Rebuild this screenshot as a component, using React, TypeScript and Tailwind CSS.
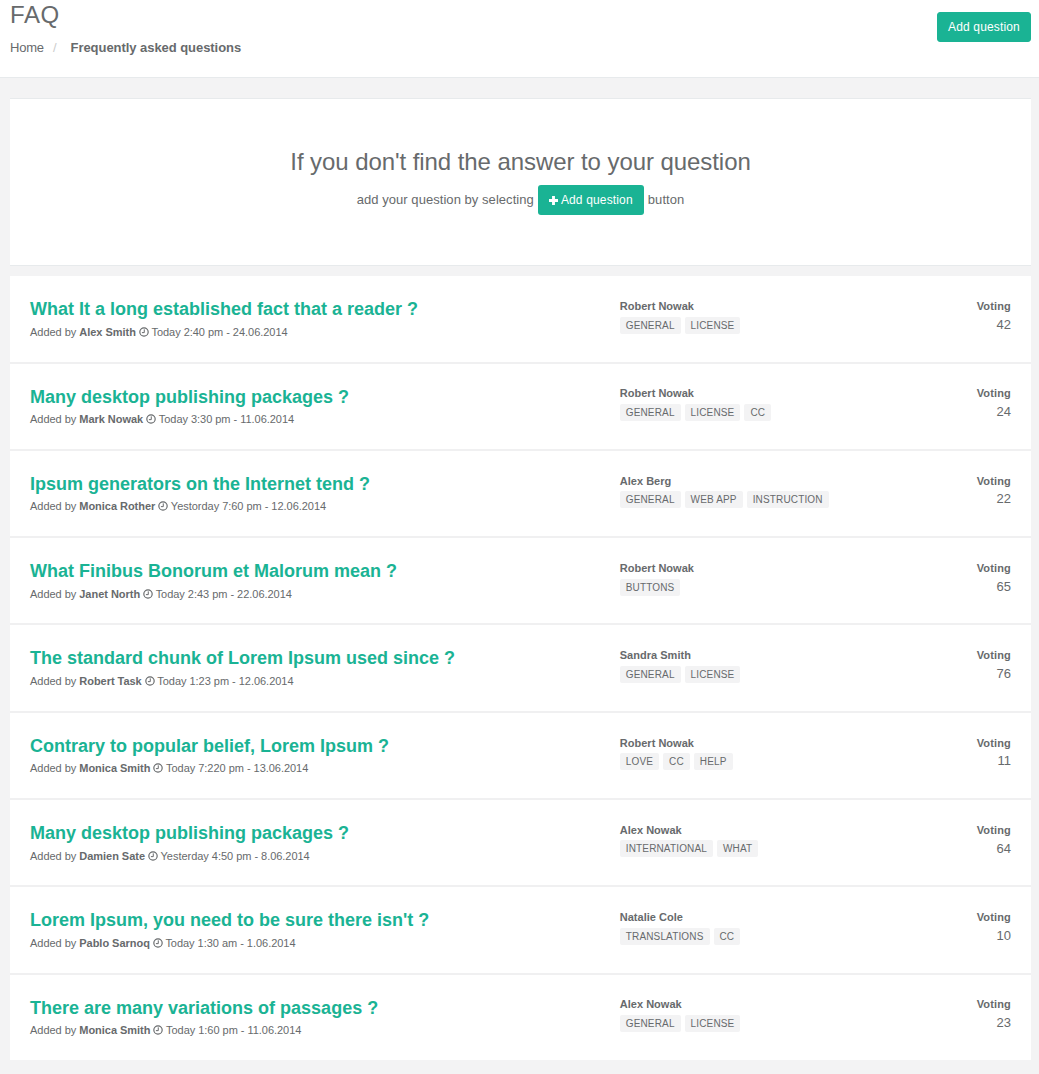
import React from "react";

const rows = [
  { q: "What It a long established fact that a reader ?", by: "Alex Smith", when: "Today 2:40 pm - 24.06.2014", name: "Robert Nowak", tags: ["GENERAL", "LICENSE"], v: 42 },
  { q: "Many desktop publishing packages ?", by: "Mark Nowak", when: "Today 3:30 pm - 11.06.2014", name: "Robert Nowak", tags: ["GENERAL", "LICENSE", "CC"], v: 24 },
  { q: "Ipsum generators on the Internet tend ?", by: "Monica Rother", when: "Yestorday 7:60 pm - 12.06.2014", name: "Alex Berg", tags: ["GENERAL", "WEB APP", "INSTRUCTION"], v: 22 },
  { q: "What Finibus Bonorum et Malorum mean ?", by: "Janet North", when: "Today 2:43 pm - 22.06.2014", name: "Robert Nowak", tags: ["BUTTONS"], v: 65 },
  { q: "The standard chunk of Lorem Ipsum used since ?", by: "Robert Task", when: "Today 1:23 pm - 12.06.2014", name: "Sandra Smith", tags: ["GENERAL", "LICENSE"], v: 76 },
  { q: "Contrary to popular belief, Lorem Ipsum ?", by: "Monica Smith", when: "Today 7:220 pm - 13.06.2014", name: "Robert Nowak", tags: ["LOVE", "CC", "HELP"], v: 11 },
  { q: "Many desktop publishing packages ?", by: "Damien Sate", when: "Yesterday 4:50 pm - 8.06.2014", name: "Alex Nowak", tags: ["INTERNATIONAL", "WHAT"], v: 64 },
  { q: "Lorem Ipsum, you need to be sure there isn't ?", by: "Pablo Sarnoq", when: "Today 1:30 am - 1.06.2014", name: "Natalie Cole", tags: ["TRANSLATIONS", "CC"], v: 10 },
  { q: "There are many variations of passages ?", by: "Monica Smith", when: "Today 1:60 pm - 11.06.2014", name: "Alex Nowak", tags: ["GENERAL", "LICENSE"], v: 23 },
];

function Clock() {
  return (
    <svg viewBox="0 0 11 11" className="inline-block w-[10px] h-[10px] align-[-1px] mr-[-0.3px]" fill="none" stroke="currentColor">
      <circle cx="5.5" cy="5.5" r="4.6" strokeWidth="1.3" />
      <path d="M5.8 2.6V6.2H3.2" strokeWidth="1.1" />
    </svg>
  );
}

function Row({ r }: { r: (typeof rows)[number] }) {
  return (
    <div className="flex h-[87.3px] last:h-[85px] last:border-b-0 bg-white border-b-2 border-[#f0f0f1] pl-5 pr-5 pt-5">
      <div className="w-[589.75px]">
        <div className="text-[18px] leading-[26px] font-bold text-[#1ab394]">{r.q}</div>
        <div className="text-[11px] leading-[16px] mt-[1.5px] tracking-[-0.03px]">
          Added by <strong>{r.by}</strong> <Clock /> {r.when}
        </div>
      </div>
      <div className="w-[252.75px] pt-[1.8px]">
        <div className="text-[11px] leading-[16px] font-bold tracking-[0.02px]">{r.name}</div>
        <div className="flex gap-[4px] mt-[2.6px]">
          {r.tags.map((t) => (
            <span key={t} className="bg-[#f3f3f4] text-[10px] leading-[15px] h-[17px] pt-[1px] px-[6px] rounded-[2px] tracking-[0.15px]">{t}</span>
          ))}
        </div>
      </div>
      <div className="flex-1 text-right pt-[1.8px]">
        <div className="text-[11px] leading-[16px] font-bold tracking-[0.15px]">Voting</div>
        <div className="text-[13px] leading-[18px] mt-[1.8px]">{r.v}</div>
      </div>
    </div>
  );
}

export default function App() {
  return (
    <div className="min-h-[1074px] bg-[#f3f3f4] text-[#676a6c] font-['Liberation_Sans',sans-serif] text-[13px]">
      <header className="flex justify-between h-[78px] bg-white border-b border-[#e7eaec] pl-[10px] pr-2">
        <div>
          <h2 className="text-[24px] leading-[26px] font-normal pt-[2px] tracking-[0.6px]">FAQ</h2>
          <div className="flex mt-[11px] text-[13px] leading-[18px]">
            <span className="tracking-[-0.2px]">Home</span>
            <span className="text-[#cccccc] ml-[9px] mr-[14px]">/</span>
            <strong className="tracking-[-0.05px]">Frequently asked questions</strong>
          </div>
        </div>
        <button className="mt-3 h-[30px] w-[94px] bg-[#1ab394] border border-[#1ab394] rounded-[3px] text-white text-[12px] tracking-[0.15px]">Add question</button>
      </header>
      <main className="pl-[10px] pr-2 pt-5">
        <section className="h-[168px] bg-white border-t border-b border-[#e7eaec] text-center pt-[47px]">
          <h2 className="text-[24px] leading-[32px] font-light tracking-[-0.07px]">If you don't find the answer to your question</h2>
          <div className="flex justify-center items-center gap-1 mt-[7px] text-[13px] leading-[18px] tracking-[0.05px]">
            <span>add your question by selecting</span>
            <button className="flex items-center gap-[3px] h-[30px] w-[106px] justify-center bg-[#1ab394] rounded-[3px] text-white text-[12px] tracking-[0.15px]">
              <svg viewBox="0 0 10 10" className="w-[9px] h-[9px]" fill="currentColor"><path d="M3.4 0h3.2v3.4H10v3.2H6.6V10H3.4V6.6H0V3.4h3.4z" /></svg>
              Add question
            </button>
            <span>button</span>
          </div>
        </section>
        <section className="mt-[10.25px]">
          {rows.map((r, i) => <Row key={i} r={r} />)}
        </section>
      </main>
    </div>
  );
}
